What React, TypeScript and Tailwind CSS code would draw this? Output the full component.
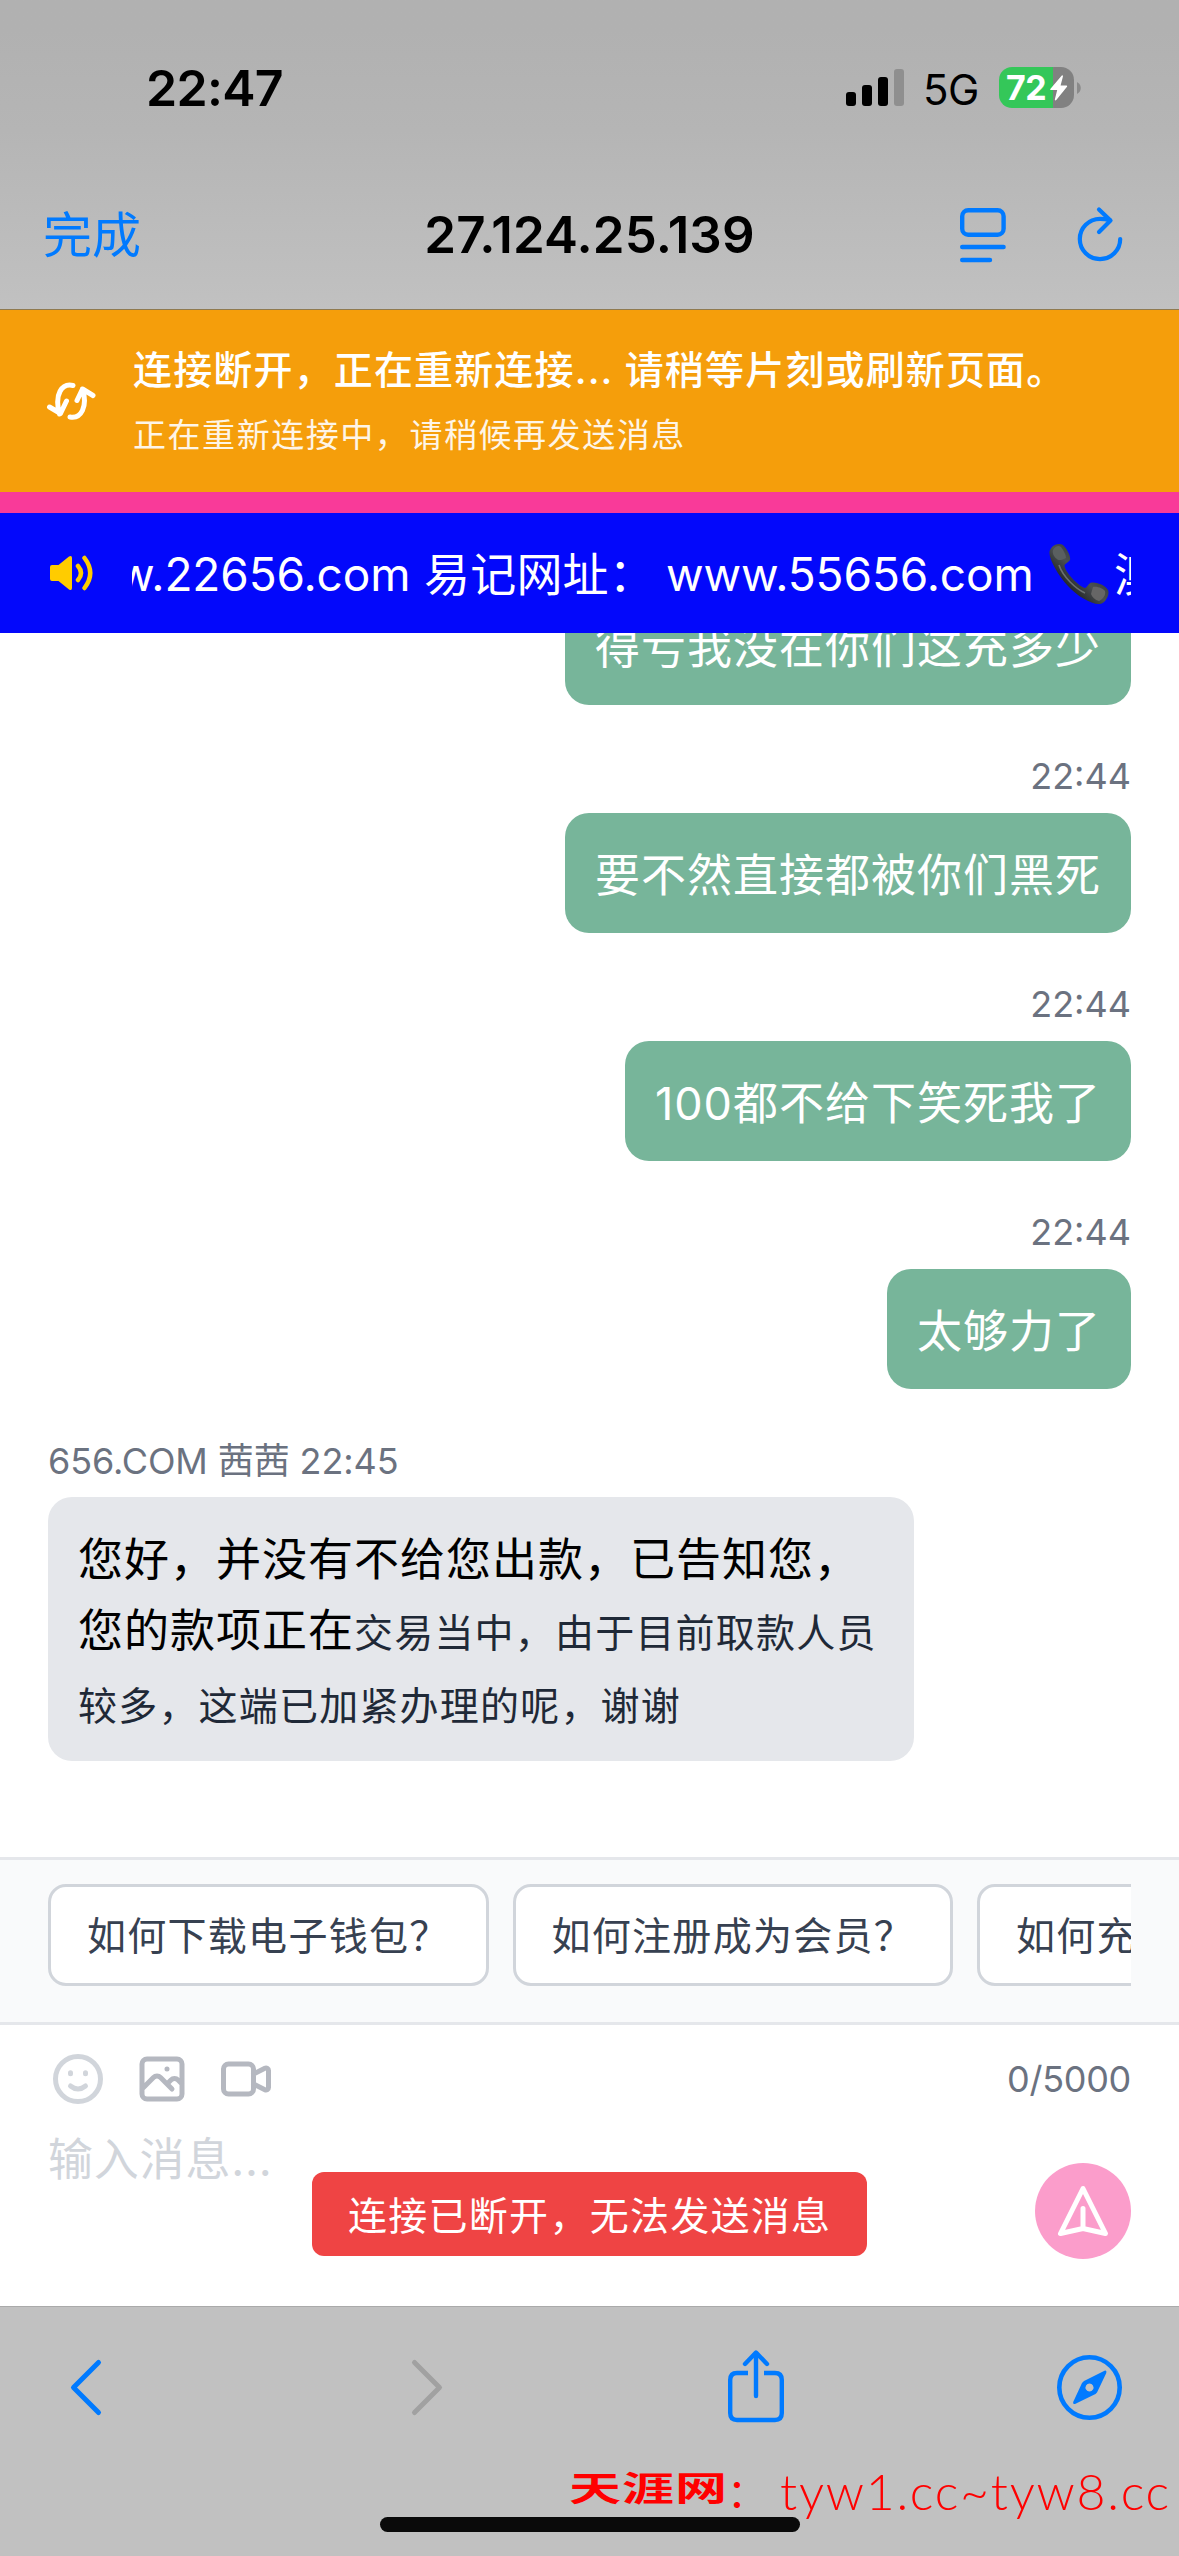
import React from "react";

const SANS = "font-['Inter','Noto_Sans_CJK_SC',sans-serif]";

function StatusBar() {
  return (
    <div className="flex h-[176px] items-start justify-between pl-[146px] pr-[98px]">
      <span className="mt-[57px] text-[50px] leading-[62px] font-semibold tracking-[-0.7px] text-black">22:47</span>
      <div className="mt-[67px] flex h-[41px] items-center">
        <svg width="58" height="37" viewBox="0 0 58 37" className="mr-[19px]">
          <rect x="0" y="23" width="10" height="14" rx="3" />
          <rect x="16" y="16" width="10" height="21" rx="3" />
          <rect x="32" y="8" width="10" height="29" rx="3" />
          <rect x="48" y="0" width="10" height="37" rx="3" fill="#8f8f8f" />
        </svg>
        <span className="mt-[4px] w-[76px] text-[42px] leading-[42px] tracking-[-0.5px] whitespace-nowrap text-black">5G</span>
        <div className="relative flex h-[41px] w-[75px] items-center overflow-hidden rounded-[13px] bg-gradient-to-r from-[#34c759] from-[72%] to-[#818181] to-[72%]">
          <span className="ml-[7px] w-[44px] text-[34px] leading-[41px] font-bold tracking-[-0.5px] text-white">72</span>
          <svg width="18" height="26" viewBox="0 0 18 26" className="shrink-0" fill="#fff">
            <path d="M11.8 0.5 L0.3 14 Q0 15 1 15 H7.2 L4.8 24.5 Q5.2 26 6.3 25 L17 11.8 Q17.5 10.5 16.4 10.4 H10.6 L13 1.2 Q12.8 -0.2 11.8 0.5Z" />
          </svg>
        </div>
        <svg width="7" height="12" viewBox="0 0 7 12" fill="#8a8a8a">
          <path d="M3 0 C8 2.5 8 9.5 3 12Z" />
        </svg>
      </div>
    </div>
  );
}

function NavBar() {
  return (
    <div className="grid h-[134px] grid-cols-3 items-start border-b border-[#8f7a50] px-[43px]">
      <span className="mt-[30px] text-[49px] leading-[60px] text-[#007aff]">完成</span>
      <span className="mt-[28px] text-center text-[51px] leading-[62px] font-semibold tracking-[0.15px] whitespace-nowrap text-black">
        27.124.25.139
      </span>
      <div className="mr-[12px] mt-[28px] flex justify-end gap-[69px]">
        <svg width="48" height="62" viewBox="0 0 48 62" fill="none" stroke="#007aff" strokeWidth="4.4" strokeLinecap="round">
          <rect x="3.2" y="6.2" width="41.4" height="24.6" rx="6" />
          <path d="M3.2 43H44.6M3.2 56H31" />
        </svg>
        <svg width="48" height="62" viewBox="0 0 48 62" fill="none" stroke="#007aff" strokeWidth="4.2" strokeLinecap="round" strokeLinejoin="round">
          <path d="M34 16.2C30 15 27 14.800 24 14.800A20.200 20.200 0 1 0 44.200 35" />
          <path d="M23 5.500L34.500 16.500L23 28" />
        </svg>
      </div>
    </div>
  );
}

function ReconnectBanner() {
  return (
    <div className="flex h-[182px] items-center bg-[#f59e0b] pl-[46px] text-white">
      <svg width="50" height="38" viewBox="0 0 50 38" fill="none" stroke="#fff" strokeWidth="5" strokeLinecap="round" strokeLinejoin="round">
        <path d="M27 3.500C16 1 8 12 13.500 32M3.500 25L14.500 31.500L20.500 19" />
        <path d="M24 35C35 37 42 25 36.500 7M31 18.500L36.500 7L47 13.500" />
      </svg>
      <div className="mt-[2px] ml-[37px] flex flex-col">
        <span className="text-[39px] leading-[60px] font-medium tracking-[1.15px] whitespace-nowrap">
          连接断开，正在重新连接... 请稍等片刻或刷新页面。
        </span>
        <span className="mt-[6px] text-[33px] leading-[58px] tracking-[1.55px] opacity-90">正在重新连接中，请稍候再发送消息</span>
      </div>
    </div>
  );
}

function PhoneIcon() {
  return (
    <svg width="60" height="62" viewBox="0 0 60 62" className="shrink-0">
      <defs>
        <linearGradient id="handset" x1="0" y1="1" x2="1" y2="0">
          <stop offset="0.3" stopColor="#25282a" />
          <stop offset="0.5" stopColor="#4b5052" />
          <stop offset="0.7" stopColor="#35393b" />
        </linearGradient>
      </defs>
      <path
        d="M3 4C6 1 11 0 14 2C18 6 22 13 21 17C20 19 17 20 15.500 22C15 28 29 43 36 45C39 44 39 40 43 39.500C49 39 57 43 59 47C61 51 57 60 51 61C43 62 28 53 19 43C8 31 -2 13 1 7Z"
        fill="url(#handset)"
      />
      <path d="M4 7C6 3 10 2 12 4C15 8 17 12 17 15C14 17 9 18 8 16C5 14 3 10 4 7Z" fill="#5a5f60" />
      <path d="M44 44C49 43 54 46 56 48C57 52 54 56 50 58C46 57 43 54 42 51Z" fill="#666" />
      <path d="M10 22C14 34 27 46 36 50" stroke="#6b7072" strokeWidth="1.600" fill="none" />
    </svg>
  );
}

function Ticker() {
  return (
    <div className="flex h-[120px] items-center bg-[#0308fb] pl-[50px] pr-[48px]">
      <svg width="44" height="40" viewBox="0 0 44 40" fill="#fc0">
        <path d="M2 12H8.500L19 3.500Q22 2 22 5V35Q22 38 19 36.500L8.500 28H2Q0 28 0 26V14Q0 12 2 12Z" />
        <path d="M28 13Q34 20 28 27M34.500 5Q46 20 34.500 35" fill="none" stroke="#fc0" strokeWidth="4.500" strokeLinecap="round" />
      </svg>
      <div className="ml-[38px] flex h-[120px] flex-1 items-center overflow-hidden pt-[2px] text-[46px] leading-[64px] whitespace-pre text-white">
        <span className="-ml-[90px] w-[382px] shrink-0 tracking-[-0.1px]">www.22656.com</span>
        <span className="w-[242px] shrink-0 tracking-[0.2px]">易记网址：</span>
        <span className="w-[383px] shrink-0 tracking-[-0.1px]">www.55656.com</span>
        <PhoneIcon />
        <span className="ml-[5px] shrink-0">澳门</span>
      </div>
    </div>
  );
}

function Outgoing({ text, time }: { text: string; time?: string }) {
  return (
    <div className="flex flex-col items-end">
      {time && <span className="mb-[13px] h-[47px] text-[36px] leading-[46px] text-[#6b7280]">{time}</span>}
      <div className="h-[120px] rounded-[24px] bg-[#77b59a] px-[30px] pt-[27px] text-[45px] leading-[72px] tracking-[1px] whitespace-nowrap text-white">
        {text}
      </div>
    </div>
  );
}

function Messages() {
  return (
    <div className="flex h-[1224px] flex-col overflow-hidden bg-white px-[48px]">
      <div className="-mt-[48px] flex flex-col gap-[48px]">
        <Outgoing text="得亏我没在你们这充多少" />
        <Outgoing time="22:44" text="要不然直接都被你们黑死" />
        <Outgoing time="22:44" text="100都不给下笑死我了" />
        <Outgoing time="22:44" text="太够力了" />
      </div>
      <div className="mt-[48px] flex flex-col items-start">
        <span className="mb-[12px] h-[48px] text-[36px] leading-[48px] tracking-[-0.1px] text-[#6b7280]">656.COM 茜茜 22:45</span>
        <div className="h-[264px] w-[866px] rounded-[24px] bg-[#e5e7eb] px-[30px] pt-[26px] text-[39px] leading-[73px] tracking-[1.2px] whitespace-nowrap text-[#1f2937]">
          <p className="text-[45px] tracking-[1px] text-black">您好，并没有不给您出款，已告知您，</p>
          <p>
            <span className="text-[45px] leading-[60px] tracking-[1px] text-black">您的款项正在</span>交易当中，由于目前取款人员
          </p>
          <p>较多，这端已加紧办理的呢，谢谢</p>
        </div>
      </div>
    </div>
  );
}

function QuickReplies() {
  return (
    <div className="h-[168px] border-y-[3px] border-[#e5e7eb] bg-[#f9fafb] px-[48px] pt-[24px]">
      <div className="flex gap-[24px] overflow-hidden">
        {["如何下载电子钱包？", "如何注册成为会员？", "如何充值？"].map((label) => (
          <button
            key={label}
            className="h-[102px] shrink-0 rounded-[18px] border-[3px] border-[#d1d5db] bg-white px-[36px] text-left text-[39px] leading-[97px] tracking-[1.28px] whitespace-nowrap text-[#374151]"
          >
            {label}
          </button>
        ))}
      </div>
    </div>
  );
}

function Composer() {
  return (
    <div className="relative h-[281px] bg-white px-[48px] pt-[24px]">
      <div className="flex h-[60px] items-center justify-between">
        <div className="flex gap-[24px]">
          <svg width="60" height="60" viewBox="0 0 24 24" fill="none" stroke="#d1d5db" strokeWidth="2" strokeLinecap="round">
            <circle cx="12" cy="12" r="9" />
            <path d="M9 14.800Q12 17.200 15 14.800" />
            <path d="M9 9.500V9.900M15 9.500V9.900" />
          </svg>
          <svg width="60" height="60" viewBox="0 0 24 24" fill="none" stroke="#b5b8c0" strokeWidth="2" strokeLinecap="round" strokeLinejoin="round">
            <path d="M4 16l4.586-4.586a2 2 0 012.828 0L16 16m-2-2l1.586-1.586a2 2 0 012.828 0L20 14m-6-6h.01M6 20h12a2 2 0 002-2V6a2 2 0 00-2-2H6a2 2 0 00-2 2v12a2 2 0 002 2z" />
          </svg>
          <svg width="60" height="60" viewBox="0 0 24 24" fill="none" stroke="#b5b8c0" strokeWidth="2" strokeLinecap="round" strokeLinejoin="round">
            <path d="M15 10l4.553-2.276A1 1 0 0121 8.618v6.764a1 1 0 01-1.447.894L15 14M5 18h8a2 2 0 002-2V8a2 2 0 00-2-2H5a2 2 0 00-2 2v8a2 2 0 002 2z" />
          </svg>
        </div>
        <span className="text-[36px] leading-[48px] tracking-[-0.3px] text-[#6b7280]">0/5000</span>
      </div>
      <div className="mt-[19px] text-[45px] leading-[64px] tracking-[0.8px] text-[#d1d5db]">输入消息...</div>
      <button className="absolute top-[138px] right-[48px] flex size-[96px] items-center justify-center rounded-full bg-[#fb9dcb]">
        <svg width="60" height="60" viewBox="0 0 24 24" fill="none" stroke="#fff" strokeWidth="2" strokeLinecap="round" strokeLinejoin="round">
          <path d="M12 19l9 2-9-18-9 18 9-2zm0 0v-8" />
        </svg>
      </button>
      <div className="absolute top-[147px] left-[312px] h-[84px] rounded-[12px] bg-[#ef4444] px-[36px] text-[39px] leading-[87px] tracking-[1.28px] whitespace-nowrap text-white">
        连接已断开，无法发送消息
      </div>
    </div>
  );
}

function BottomBar() {
  return (
    <div className="relative flex h-[250px] flex-col items-center bg-[#c1c1c1]">
      <div className="h-px w-full bg-[#aaa]" />
      <div className="mt-[40px] flex h-[80px] w-full items-center pl-[69px]">
        <svg width="34" height="60" viewBox="0 0 34 60" fill="none" stroke="#007aff" strokeWidth="5" strokeLinecap="round" strokeLinejoin="round">
          <path d="M29.500 5.500L4.500 30.500L29.500 55.500" />
        </svg>
        <svg className="ml-[307px]" width="34" height="60" viewBox="0 0 34 60" fill="none" stroke="#a1a1a1" strokeWidth="5" strokeLinecap="round" strokeLinejoin="round">
          <path d="M4.500 5.500L29.500 30.500L4.500 55.500" />
        </svg>
        <svg className="ml-[282px]" width="60" height="76" viewBox="0 0 60 76" fill="none" stroke="#007aff" strokeWidth="4.400" strokeLinecap="round" strokeLinejoin="round">
          <path d="M22 24H11Q4.200 24 4.200 31V64Q4.200 71 11 71H49Q55.800 71 55.800 64V31Q55.800 24 49 24H38" strokeLinecap="butt" />
          <path d="M30 47V4M19 15L30 3.500L41 15" />
        </svg>
        <svg className="ml-[268px]" width="71" height="70" viewBox="0 0 71 70">
          <circle cx="35.500" cy="35.500" r="30.200" fill="none" stroke="#007aff" strokeWidth="4.600" />
          <path
            fillRule="evenodd"
            fill="#007aff"
            d="M50.500 18.700Q53 18 52.300 21L43 40.500L41.500 42L21 52Q18.500 52.600 19.200 50L28 31L30 29ZM35.500 31.500a4 4 0 1 0 0.010 0Z"
          />
        </svg>
      </div>
      <div className="mt-[90px] h-[15px] w-[420px] rounded-full bg-[#0a0a0a]" />
      <div className="absolute top-[153px] right-[8px] flex h-[60px] items-center whitespace-nowrap text-[#f00]">
        <span className="inline-block w-[158px] scale-y-[.66] text-[52px] leading-[60px] font-bold tracking-[1px]">天涯网</span>
        <span className="mt-[8px] w-[53px] text-[40px] leading-[60px]">：</span>
        <span className="mt-[3px] w-[391px] font-['Lato'] text-[50px] leading-[60px] font-light tracking-[1.75px]">tyw1.cc~tyw8.cc</span>
      </div>
    </div>
  );
}

export default function App() {
  return (
    <div className={`flex h-[2556px] w-[1179px] flex-col overflow-hidden bg-white ${SANS}`}>
      <header className="h-[310px] bg-linear-to-b from-[#b1b1b1] from-10% via-[#b5b5b5] via-42% to-[#c1c1c1]">
        <StatusBar />
        <NavBar />
      </header>
      <ReconnectBanner />
      <div className="h-[21px] shrink-0 bg-[#f93a99]" />
      <Ticker />
      <Messages />
      <QuickReplies />
      <Composer />
      <BottomBar />
    </div>
  );
}
